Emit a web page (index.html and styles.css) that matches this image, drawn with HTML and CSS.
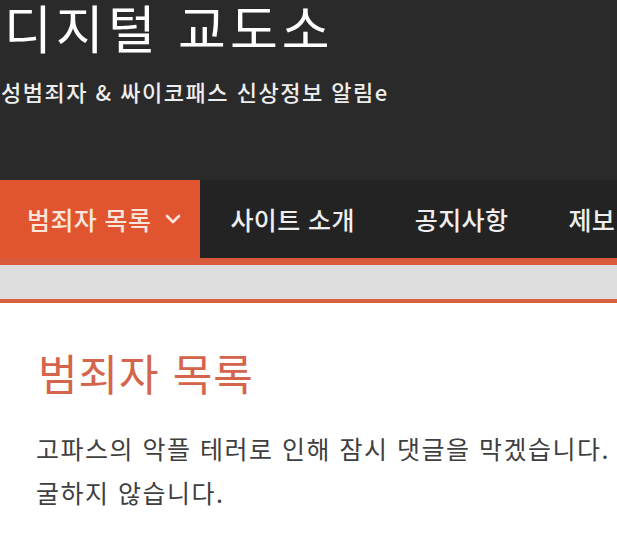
FILE: index.html
```html
<!DOCTYPE html>
<html lang="ko">
<head>
    <meta charset="UTF-8">
    <meta name="viewport" content="width=device-width, initial-scale=1.0">
    <title>디지털 교도소</title>
    <link rel="stylesheet" href="styles.css">
</head>
<body>
    <header class="site-header">
        <h1 class="site-title">디지털 교도소</h1>
        <p class="site-desc">성범죄자 &amp; 싸이코패스 신상정보 알림e</p>
    </header>

    <nav class="main-nav">
        <a class="nav-item active" href="#">범죄자 목록
            <svg class="chevron" width="16" height="10" viewBox="0 0 16 10">
                <polyline points="2,2 8,8 14,2" fill="none" stroke="currentColor" stroke-width="2.6" stroke-linecap="round" stroke-linejoin="round"/>
            </svg>
        </a>
        <a class="nav-item" href="#">사이트 소개</a>
        <a class="nav-item" href="#">공지사항</a>
        <a class="nav-item" href="#">제보</a>
    </nav>

    <div class="sub-bar"></div>

    <main class="content">
        <h2 class="page-title">범죄자 목록</h2>
        <p class="notice">고파스의 악플 테러로 인해 잠시 댓글을 막겠습니다.<br>굴하지 않습니다.</p>
    </main>
</body>
</html>
```

FILE: styles.css
```css
body {
    margin: 0;
    font-family: "Noto Sans CJK KR", "Noto Sans", sans-serif;
    background-color: #fff;
    overflow: hidden;
}
.site-header {
    background-color: #2a2a2a;
    height: 180px;
    padding: 1px 0 0 4px;
    box-sizing: border-box;
}
.site-title {
    margin: 0;
    font-size: 52px;
    line-height: 52px;
    font-weight: 400;
    letter-spacing: 4px;
    color: #fff;
    white-space: nowrap;
}
.site-desc {
    margin: 23px 0 0 -3px;
    font-size: 22px;
    line-height: 30px;
    font-weight: 500;
    letter-spacing: 1.5px;
    color: #eee;
    white-space: nowrap;
}
.main-nav {
    display: flex;
    height: 78px;
    background-color: #232323;
    border-bottom: 7px solid #d95a3a;
}
.nav-item {
    display: flex;
    align-items: center;
    padding: 0 30px;
    font-size: 25px;
    font-weight: 500;
    letter-spacing: 0.4px;
    color: #eee;
    text-decoration: none;
    white-space: nowrap;
}
.nav-item.active {
    background-color: #e0552f;
    color: #fbe6dd;
    padding: 0 19px 0 27px;
}
.chevron {
    margin-left: 14px;
}
.sub-bar {
    height: 34px;
    background-color: #dedede;
    border-bottom: 4px solid #d9603f;
}
.content {
    padding: 44px 0 0 38px;
}
.page-title {
    margin: 0;
    font-size: 43px;
    line-height: 50px;
    font-weight: 400;
    letter-spacing: 1px;
    color: #d4654c;
}
.notice {
    margin: 29px 0 0 -2px;
    font-size: 25px;
    line-height: 44px;
    letter-spacing: 1.5px;
    color: #3f3f3f;
    white-space: nowrap;
}
```
